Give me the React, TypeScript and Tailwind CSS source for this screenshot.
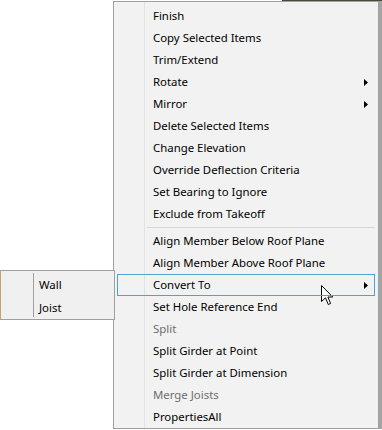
import React from 'react';

type Item = { label: string; sub?: boolean; disabled?: boolean; active?: boolean; sep?: boolean };

const items: Item[] = [
  { label: 'Finish' },
  { label: 'Copy Selected Items' },
  { label: 'Trim/Extend' },
  { label: 'Rotate', sub: true },
  { label: 'Mirror', sub: true },
  { label: 'Delete Selected Items' },
  { label: 'Change Elevation' },
  { label: 'Override Deflection Criteria' },
  { label: 'Set Bearing to Ignore' },
  { label: 'Exclude from Takeoff' },
  { label: '', sep: true },
  { label: 'Align Member Below Roof Plane' },
  { label: 'Align Member Above Roof Plane' },
  { label: 'Convert To', sub: true, active: true },
  { label: 'Set Hole Reference End' },
  { label: 'Split', disabled: true },
  { label: 'Split Girder at Point' },
  { label: 'Split Girder at Dimension' },
  { label: 'Merge Joists', disabled: true },
  { label: 'PropertiesAll' },
];

function Arrow() {
  return (
    <svg width="4" height="7" viewBox="0 0 4 7" className="block">
      <polygon points="0,0 4,3.5 0,7" fill="#000" />
    </svg>
  );
}

function MenuRow({ item }: { item: Item }) {
  if (item.sep) {
    return (
      <div className="h-[5px] pl-[33px] pr-[3px] flex items-center">
        <div className="h-px w-full bg-[#d7d7d7]" />
      </div>
    );
  }
  return (
    <div
      className={
        'relative z-10 h-[22px] mx-[3px] flex items-center ' +
        (item.active ? 'border border-[#4ea4cf] pl-[35px] pr-[6px]' : 'pl-[36px] pr-[7px]') +
        (item.disabled ? ' text-[#6d6d6d]' : ' text-black')
      }
    >
      <span className="flex-1 whitespace-nowrap">{item.label}</span>
      {item.sub && <Arrow />}
    </div>
  );
}

export default function App() {
  return (
    <div
      className="relative w-[382px] h-[430px] bg-white overflow-hidden text-[11.4px] leading-none"
      style={{ fontFamily: '"Noto Sans", "Open Sans", sans-serif' }}
    >
      {/* canvas fragments peeking out */}
      <div className="absolute top-0 left-[282px] w-[100px] h-[2px] bg-[#4a4a32]" />
      <div className="absolute top-[42px] left-[378px] w-[4px] h-[5px] bg-[#3f7fbf]" />
      <div className="absolute top-[84px] left-[378px] w-[4px] h-[5px] bg-[#3f7fbf]" />

      {/* main context menu */}
      <div className="absolute left-[113px] top-[1px] w-[266px] bg-[#f2f2f2] border border-[#a0a0a0] pt-[3px] shadow-[4px_0_0_#a4a4a4]">
        <div className="absolute left-[30px] top-0 bottom-0 w-px bg-[#e2e2e2]" />
        {items.map((it, i) => (
          <MenuRow key={i} item={it} />
        ))}
      </div>

      {/* submenu */}
      <div className="absolute left-0 top-[270px] w-[115px] bg-[#f0f0f0] border border-[#a0a0a0] border-l-[#c8a070] pt-[2px]">
        <div className="absolute left-[32px] top-[2px] bottom-[2px] w-px bg-[#a0a0a0]" />
        <div className="h-[23px] flex items-center pl-[38px]">Wall</div>
        <div className="h-[23px] flex items-center pl-[38px]">Joist</div>
      </div>

      {/* mouse cursor */}
      <svg className="absolute left-[321px] top-[285px]" width="13" height="21" viewBox="0 0 13 21">
        <path
          d="M0.5 0.5 L0.5 16.5 L4.5 12.8 L7.3 19.5 L9.6 18.5 L6.9 12 L11.8 12 Z"
          fill="#fff"
          stroke="#000"
          strokeWidth="1"
          strokeLinejoin="miter"
        />
      </svg>
    </div>
  );
}
